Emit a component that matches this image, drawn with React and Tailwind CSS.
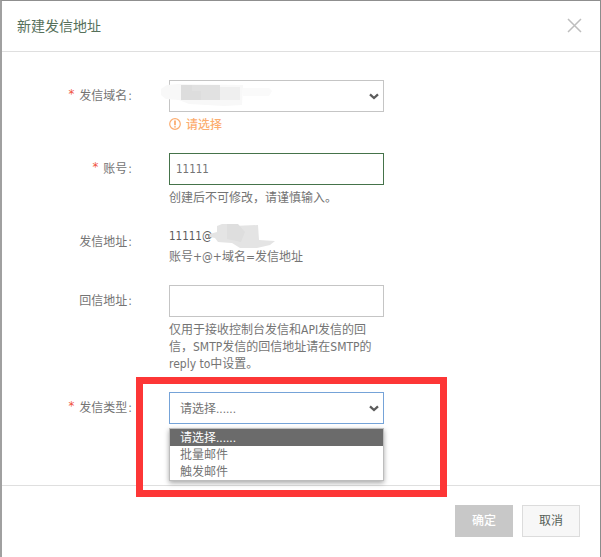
import React from "react";

const Chevron = () => (
  <svg width="10" height="7" viewBox="0 0 10 7" fill="none" className="shrink-0">
    <path d="M1 1.3 5 5 9 1.3" stroke="#5c5c5c" strokeWidth="2.3" />
  </svg>
);

function Row({ label, required, className, children }) {
  return (
    <div className={`flex items-start ${className}`}>
      <div className="flex h-8 w-[131px] items-center justify-end pr-px">
        {required && <span className="mr-[5px] pb-[5px] text-[13px] text-[#f0523c]">*</span>}
        <span>
          {label}
          <span className="ml-px">:</span>
        </span>
      </div>
      <div className="ml-[36px] w-[215px]">{children}</div>
    </div>
  );
}

const options = ["请选择......", "批量邮件", "触发邮件"];

export default function App() {
  return (
    <div className="flex h-[557px] w-[601px] flex-col overflow-hidden border-t border-r border-l-2 border-t-[#8f8f8f] border-r-[#8c8c8c] border-l-[#a0a0a0] bg-white font-['DejaVu_Sans_Condensed','DejaVu_Sans','Noto_Sans_CJK_SC',sans-serif] text-[12px] leading-[17px] whitespace-nowrap text-[#747474] [font-stretch:condensed]">
      <header className="flex h-[51px] shrink-0 items-center justify-between border-b border-[#dfdfdf] pr-[18px] pl-[15px]">
        <h1 className="text-[14px] text-[#56705a]">新建发信地址</h1>
        <svg width="15" height="15" viewBox="0 0 15 15" className="-mt-[2px]">
          <path d="M1 1 14 14M14 1 1 14" stroke="#bebebe" strokeWidth="1.5" />
        </svg>
      </header>

      <main className="h-[433px] shrink-0 pt-[28px]">
        <Row label="发信域名" required className="h-[73px]">
          <div className="relative flex h-8 items-center justify-end border border-[#c5c5c5] pr-[4px]">
            <svg className="absolute -top-px -left-[9px]" width="114" height="30" viewBox="0 0 114 30">
              <path d="M0 9 6 5 18 4 82 5 81 25 63 26 28 24 18 20 5 19 0 15Z" fill="#f8f8f8" />
              <path d="M82 8h26l3 3-3 5H82Z" fill="#fafafa" />
              <path d="M20 5h39v15H20Z" fill="#e1e1e1" />
              <path d="M20 5h11v6h9v9H20Z" fill="#dddddd" />
              <path d="M59 7h20v13H59Z" fill="#efefef" />
            </svg>
            <Chevron />
          </div>
          <div className="mt-[5px] flex items-center text-[#fcad70]">
            <svg width="12" height="12" viewBox="0 0 12 12" fill="none" stroke="#fcad70" className="-mt-[3px]">
              <circle cx="6" cy="6" r="5.3" strokeWidth="1.2" />
              <path d="M6 2.5v4.8M6 8.2v1.4" strokeWidth="1.8" />
            </svg>
            <span className="ml-[5px] font-medium">请选择</span>
          </div>
        </Row>

        <Row label="账号" required className="h-[73px]">
          <div className="flex h-8 items-center border border-[#45734a] pl-[6px]">
            <span className="pt-px text-[11.5px]">11111</span>
          </div>
          <div className="mt-[5px]">创建后不可修改，请谨慎输入。</div>
        </Row>

        <Row label="发信地址" className="h-[59px]">
          <div className="flex h-[20px] items-center">
            <span className="text-[11.5px] text-[#5c5c5c]">11111@</span>
            <svg className="-ml-[2px]" width="66" height="27" viewBox="0 0 66 27">
              <path d="M0 11 7 9V3l5-2h5l6 2 25-1 1 15 16 1-5 4-13 3H30L22 20l-14-1-3-4-5-1Z" fill="#e4e4e4" />
              <path d="M17 1h11l7 8-4 10-14-3Z" fill="#dedede" />
            </svg>
          </div>
          <div className="mt-[3px]">账号+@+域名=发信地址</div>
        </Row>

        <Row label="回信地址" className="h-[107px]">
          <div className="h-8 border border-[#c5c5c5]" />
          <div className="mt-[5px]">
            仅用于接收控制台发信和API发信的回
            <br />
            信，SMTP发信的回信地址请在SMTP的
            <br />
            reply to中设置。
          </div>
        </Row>

        <Row label="发信类型" required className="h-[93px]">
          <div className="relative">
            <div className="flex h-8 items-center justify-between border border-[#75a3d8] pr-[4px] pl-[10px]">
              <span className="pt-[2px] font-['Liberation_Sans','Noto_Sans_CJK_SC',sans-serif]">{options[0]}</span>
              <Chevron />
            </div>
            <ul className="absolute top-[36px] left-0 z-10 w-[215px] border border-[#bdbdbd] bg-white font-['Liberation_Sans','Noto_Sans_CJK_SC',sans-serif] leading-[19px] shadow-[0_2px_5px_rgba(0,0,0,0.35)]">
              <li className="h-[17px] bg-[#6b6b6b] pl-[10px] text-white">{options[0]}</li>
              <li className="h-[17px] pl-[10px]">{options[1]}</li>
              <li className="h-[17px] pl-[10px]">{options[2]}</li>
            </ul>
            <div className="pointer-events-none absolute -top-[15px] -left-[33px] z-20 h-[120px] w-[311px] border-[7px] border-[#fd3636]" />
          </div>
        </Row>
      </main>

      <footer className="flex grow justify-end gap-[9px] border-t border-[#dfdfdf] pt-[19px] pr-[20px]">
        <button className="h-8 w-[58px] bg-[#c8c8c8] pt-px font-medium text-white">确定</button>
        <button className="h-8 w-[58px] border border-[#dcdcdc] bg-[#f7f7f7] pt-px text-[#566057]">取消</button>
      </footer>
    </div>
  );
}
